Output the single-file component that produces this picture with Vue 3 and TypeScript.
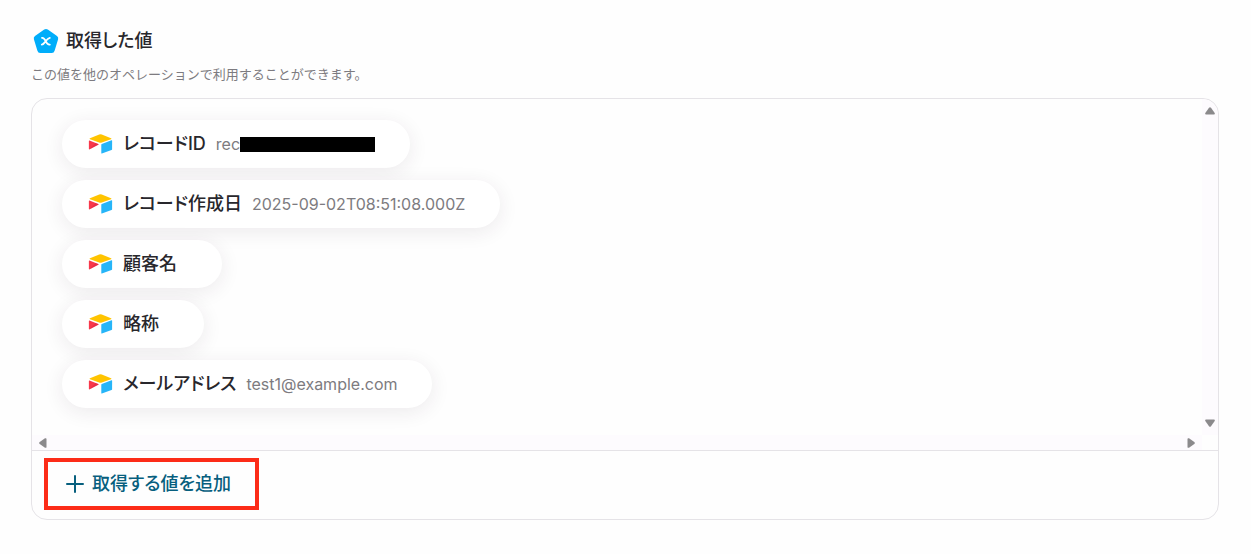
<script setup lang="ts">
interface RecordValue {
  label: string
  value: string
  redacted?: boolean
}

const values: RecordValue[] = [
  { label: 'レコードID', value: 'rec', redacted: true },
  { label: 'レコード作成日', value: '2025-09-02T08:51:08.000Z' },
  { label: '顧客名', value: '' },
  { label: '略称', value: '' },
  { label: 'メールアドレス', value: 'test1@example.com' },
]
</script>

<template>
  <section class="output" aria-labelledby="output-title">
    <header class="heading">
      <svg class="badge" viewBox="0 0 26 26" aria-hidden="true">
        <path
          d="M11.2 1.5Q13 .3 14.8 1.5L24 8Q25.7 9.3 25.1 11.2L21.6 22.8Q21 25 18.8 25H7.2Q5 25 4.4 22.8L.9 11.2Q.3 9.3 2 8Z"
          fill="#00adfa"
        />
        <path
          d="M9 9.800C11 9.500 11.700 11 12.700 13.200S14.500 17 16.800 16.700M16.800 9.800C15 10 14 11.600 12.700 13.200S10.500 16.500 8.800 16.700"
          fill="none"
          stroke="#fff"
          stroke-width="1.8"
          stroke-linecap="round"
        />
      </svg>
      <h2 id="output-title">取得した値</h2>
    </header>
    <p class="description">この値を他のオペレーションで利用することができます。</p>

    <div class="panel">
      <div class="viewport">
        <ul class="values">
          <li v-for="item in values" :key="item.label" class="chip">
            <svg class="logo" viewBox="0 0 24 20" aria-hidden="true">
              <path d="M10.700.5Q12 0 13.300.5L22.500 4.200Q23.500 4.700 22.500 5.200L13.300 8.600Q12 9 10.700 8.600L1.500 5.200Q.5 4.700 1.500 4.200Z" fill="#ffc400" />
              <path d="M12.800 10.700Q12.800 10.100 13.300 9.900L23 6.300Q23.600 6.200 23.600 6.800V15.200Q23.600 15.700 23 16L13.400 19.500Q12.800 19.700 12.800 19Z" fill="#26b5f8" />
              <path d="M.4 7Q.4 6.300 1 6.500L9.800 10Q10.500 10.400 9.800 10.800L1.200 15.300Q.4 15.600.4 14.900Z" fill="#f8384b" />
              <path d="M.8 15.400L7 9L9.800 10Q10.500 10.400 9.800 10.800Z" fill="#cf1f40" opacity=".35" />
            </svg>
            <span class="label">{{ item.label }}</span>
            <span class="value">{{ item.value }}<span v-if="item.redacted" class="redaction"></span></span>
          </li>
        </ul>
        <div class="track vertical" aria-hidden="true">
          <svg viewBox="0 0 10 8"><path d="M4 .7Q5-.4 6 .7L9.700 6Q10.200 7.500 9 7.500H1Q-.2 7.500.3 6Z" /></svg>
          <svg class="down" viewBox="0 0 10 8"><path d="M4 .7Q5-.4 6 .7L9.700 6Q10.200 7.500 9 7.500H1Q-.2 7.500.3 6Z" /></svg>
        </div>
        <div class="track horizontal" aria-hidden="true">
          <svg class="left" viewBox="0 0 8 10"><path d="M.7 4Q-.4 5 .7 6L6 9.700Q7.500 10.200 7.500 9V1Q7.500-.2 6 .3Z" /></svg>
          <svg class="right" viewBox="0 0 8 10"><path d="M.7 4Q-.4 5 .7 6L6 9.700Q7.500 10.200 7.500 9V1Q7.500-.2 6 .3Z" /></svg>
        </div>
      </div>
      <footer class="actions">
        <button type="button" class="add">
          <svg class="plus" viewBox="0 0 18 18" aria-hidden="true">
            <path d="M9 1V17M1 9H17" stroke="currentColor" stroke-width="2" stroke-linecap="round" />
          </svg>
          <span>取得する値を追加</span>
        </button>
      </footer>
    </div>
  </section>
</template>

<style>
body {
  margin: 0;
  background: #fefefe;
}
</style>

<style scoped>
.output {
  padding: 28px 32px 34px 31px;
  color: #28272c;
  font-family: Inter, "Noto Sans CJK JP", sans-serif;
}

.heading {
  display: flex;
  align-items: center;
  gap: 7px;
  height: 26px;
  padding-left: 2px;
}

.badge {
  width: 26px;
  height: 26px;
}

h2 {
  margin: 0;
  font-size: 18px;
  font-weight: 500;
  line-height: 26px;
  font-feature-settings: "palt";
}

.description {
  margin: 10px 0 14px;
  color: #7d7b80;
  font-size: 13px;
  line-height: 20px;
}

.panel {
  border: 1px solid #e5e3e7;
  border-radius: 16px;
}

.viewport {
  display: grid;
  grid-template-columns: 1fr 16px;
  grid-template-rows: auto 15px;
  border-bottom: 1px solid #e5e3e7;
}

.values {
  display: flex;
  flex-direction: column;
  align-items: flex-start;
  gap: 12px;
  margin: 0;
  padding: 21px 30px 27px;
  list-style: none;
}

.chip {
  display: flex;
  align-items: center;
  box-sizing: border-box;
  height: 48px;
  padding: 0 35px 0 26px;
  border-radius: 24px;
  background: #fff;
  box-shadow: 0 4px 20px rgb(50 35 60 / 9%);
  white-space: nowrap;
}

.logo {
  width: 25px;
  height: 20px;
  margin-right: 10px;
}

.label {
  margin-right: 10px;
  font-size: 18px;
  font-weight: 500;
  line-height: 26px;
  font-feature-settings: "palt";
}

.value {
  display: flex;
  align-items: center;
  color: #7d7b80;
  font-size: 16px;
  line-height: 24px;
}

.redaction {
  width: 135px;
  height: 15px;
  background: #000;
}

.track {
  display: flex;
  align-items: center;
  justify-content: space-between;
  background: #fdfbfe;
}

.track svg {
  fill: #8b8a8c;
}

.vertical {
  flex-direction: column;
  padding: 8px 0;
  border-top-right-radius: 16px;
}

.vertical svg {
  width: 10px;
  height: 8px;
}

.down,
.right {
  transform: rotate(180deg);
}

.horizontal {
  padding: 0 7px;
}

.horizontal svg {
  width: 8px;
  height: 10px;
}

.actions {
  padding: 7px 12px 9px;
}

.add {
  display: flex;
  align-items: center;
  gap: 8px;
  height: 52px;
  padding: 0 24px 0 18px;
  border: 4px solid #fc2c18;
  background: transparent;
  color: #075f7e;
  font-family: inherit;
  font-size: 18px;
  font-weight: 500;
  line-height: 26px;
  font-feature-settings: "palt";
  cursor: pointer;
}

.plus {
  width: 18px;
  height: 18px;
}
</style>
